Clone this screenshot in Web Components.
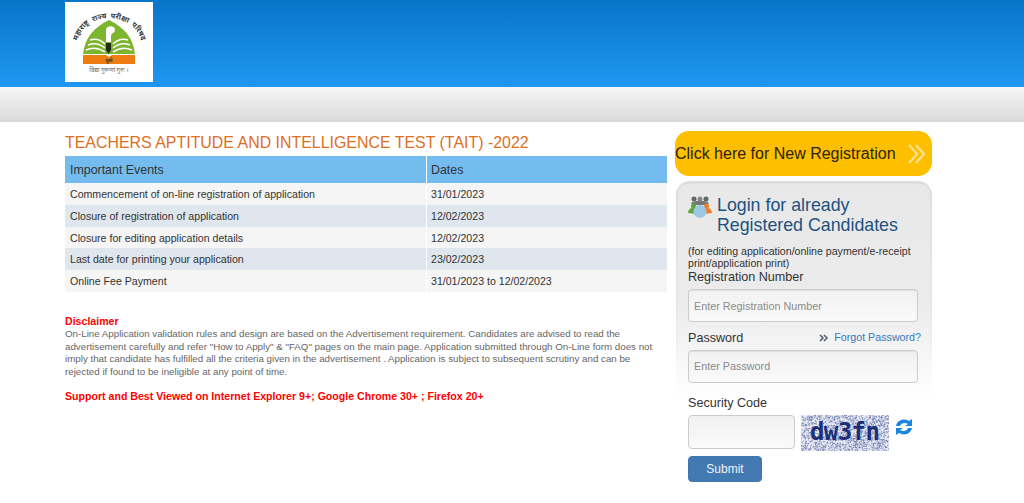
<!DOCTYPE html>
<html lang="en">
<head>
<meta charset="utf-8">
<title>TAIT 2022</title>
<style>
  html, body { margin: 0; padding: 0; background: #fff; }
  body { font-family: "Liberation Sans", Arial, sans-serif; color: #333; }
</style>
</head>
<body>
<site-header></site-header>
<page-main>
  <div slot="left">
    <events-table></events-table>
    <disclaimer-note></disclaimer-note>
  </div>
  <div slot="right">
    <register-button></register-button>
    <login-panel></login-panel>
  </div>
</page-main>

<script>
class SiteHeader extends HTMLElement {
  connectedCallback() {
    this.attachShadow({ mode: 'open' });
    this.shadowRoot.innerHTML = `
      <style>
        :host { display: block; }
        .top {
          height: 87px;
          box-sizing: border-box;
          padding: 2px 0 0 65px;
          background: linear-gradient(to bottom, #0875c9, #1f97f1);
        }
        .logo { display: block; width: 88px; height: 80px; background: #fff; }
        .bar {
          height: 35px;
          background: linear-gradient(to bottom, #f6f6f6, #d9d9d9);
        }
      </style>
      <div class="top">
        <svg class="logo" viewBox="0 0 88 80">
          <defs><path id="arc" d="M12 44 C14 7 74 7 77 44"/></defs>
          <text font-size="7.4" font-weight="700" word-spacing="2" fill="#3a3a3a" font-family="'Noto Sans', 'Noto Sans CJK SC', sans-serif"><textPath href="#arc" startOffset="50%" text-anchor="middle">महाराष्ट्र राज्य परीक्षा परिषद</textPath></text>
          <path d="M18 52 C20 36 28 26 44 18 C60 26 68 36 70 52 Z" fill="#7db52f"/>
          <path d="M41 40 V28 C41 23 50 23 50 28 C50 31 46 31 46 34 V40 Z" fill="#fff"/>
          <path d="M41 41 H46 V48 L43.500 52 L41 48 Z" fill="#1f2d14"/>
          <path d="M25 38 C31 36 36 38 40 42 M23 43 C30 40 35 42 40 46 M21 48 C28 45 34 46 40 50 M63 38 C57 36 52 38 48 42 M65 43 C58 40 53 42 48 46 M67 48 C60 45 54 46 48 50" stroke="#fff" stroke-width="1.500" fill="none"/>
          <path d="M18 53 H41 L44 55 L47 53 H70 V62 H18 Z" fill="#ee7d11"/>
          <text x="44" y="60" font-size="5" font-weight="700" text-anchor="middle" fill="#333" font-family="'Noto Sans', sans-serif">पुणे</text>
          <text x="44" y="70" font-size="6" text-anchor="middle" fill="#666" font-family="'Noto Sans', sans-serif">विद्या गुरूणां गुरुः ।</text>
        </svg>
      </div>
      <div class="bar"></div>
    `;
  }
}

class PageMain extends HTMLElement {
  connectedCallback() {
    this.attachShadow({ mode: 'open' });
    this.shadowRoot.innerHTML = `
      <style>
        :host {
          display: flex;
          gap: 8px;
          padding: 9px 0 0 65px;
        }
        .left { width: 602px; }
        .right { width: 257px; }
      </style>
      <div class="left"><slot name="left"></slot></div>
      <div class="right"><slot name="right"></slot></div>
    `;
  }
}

class EventsTable extends HTMLElement {
  connectedCallback() {
    this.attachShadow({ mode: 'open' });
    const rows = [
      ['Commencement of on-line registration of application', '31/01/2023'],
      ['Closure of registration of application', '12/02/2023'],
      ['Closure for editing application details', '12/02/2023'],
      ['Last date for printing your application', '23/02/2023'],
      ['Online Fee Payment', '31/01/2023 to 12/02/2023']
    ];
    this.shadowRoot.innerHTML = `
      <style>
        :host { display: block; }
        h1 {
          margin: 0;
          height: 25px;
          font-size: 15.93px;
          line-height: 24px;
          font-weight: 400;
          color: #dd6f1e;
          white-space: nowrap;
        }
        .row {
          display: grid;
          grid-template-columns: 361px 1fr;
          height: 21.8px;
          line-height: 21.8px;
          font-size: 10.6px;
          color: #333;
          background: #f5f5f5;
        }
        .row:nth-child(odd) { background: #dfe6ee; }
        .row.head {
          height: 27px;
          line-height: 27px;
          font-size: 12.4px;
          background: #74bcf0;
        }
        .row > span { padding: 1px 0 0 5px; }
        .row > span + span { border-left: 1px solid #fff; padding-left: 4px; }
      </style>
      <h1>TEACHERS APTITUDE AND INTELLIGENCE TEST (TAIT) -2022</h1>
      <div class="list">
        <div class="row head"><span>Important Events</span><span>Dates</span></div>
        ${rows.map(r => `<div class="row"><span>${r[0]}</span><span>${r[1]}</span></div>`).join('')}
      </div>
    `;
  }
}

class DisclaimerNote extends HTMLElement {
  connectedCallback() {
    this.attachShadow({ mode: 'open' });
    this.shadowRoot.innerHTML = `
      <style>
        :host { display: block; padding-top: 23px; font-size: 9.75px; line-height: 12.5px; color: #666; }
        b { display: block; color: #f00; font-size: 10.6px; line-height: 12px; }
        p { margin: 1.5px 0 0; }
        .support { margin-top: 12px; color: #f00; font-weight: 700; font-size: 10.6px; }
      </style>
      <b>Disclaimer</b>
      <p>On-Line Application validation rules and design are based on the Advertisement requirement. Candidates are advised to read the advertisement carefully and refer "How to Apply" &amp; "FAQ" pages on the main page. Application submitted through On-Line form does not imply that candidate has fulfilled all the criteria given in the advertisement . Application is subject to subsequent scrutiny and can be rejected if found to be ineligible at any point of time.</p>
      <div class="support">Support and Best Viewed on Internet Explorer 9+; Google Chrome 30+ ; Firefox 20+</div>
    `;
  }
}

class RegisterButton extends HTMLElement {
  connectedCallback() {
    this.attachShadow({ mode: 'open' });
    this.shadowRoot.innerHTML = `
      <style>
        :host {
          display: flex;
          align-items: center;
          justify-content: space-between;
          height: 45px;
          padding-right: 5px;
          border-radius: 14px;
          background: #fdbf00;
          color: #2a2200;
          font-size: 16px;
          white-space: nowrap;
        }
        svg { width: 20px; height: 20px; }
      </style>
      <span>Click here for New Registration</span>
      <svg viewBox="0 0 20 20" fill="none" stroke="#fde08a" stroke-width="2.4">
        <path d="M2 1 L10 10 L2 19"/><path d="M9 1 L17 10 L9 19"/>
      </svg>
    `;
  }
}

class LoginField extends HTMLElement {
  connectedCallback() {
    this.attachShadow({ mode: 'open' });
    const ph = this.getAttribute('placeholder') || '';
    this.shadowRoot.innerHTML = `
      <style>
        :host { display: block; }
        .top { display: flex; justify-content: space-between; align-items: baseline; font-size: 12.6px; line-height: 15px; color: #333; }
        input {
          display: block;
          box-sizing: border-box;
          width: 230px;
          height: 33px;
          margin: 4px 0 0;
          padding: 0 5px;
          border: 1px solid #ccc;
          border-radius: 4px;
          background: linear-gradient(to bottom, #f1f1f1, #fafafa);
          box-shadow: inset 0 1px 1px rgba(0,0,0,.08);
          font: 10.8px "Liberation Sans", Arial, sans-serif;
          color: #555;
        }
        input::placeholder { color: #8a8a8a; opacity: 1; }
      </style>
      <div class="top"><span>${this.getAttribute('label')}</span><slot></slot></div>
      <input type="text" placeholder="${ph}">
    `;
  }
}

class CaptchaImage extends HTMLElement {
  connectedCallback() {
    this.attachShadow({ mode: 'open' });
    // speckle background, seeded so every render is the same
    let seed = 7, dots = '';
    const rnd = () => (seed = (seed * 16807) % 2147483647) / 2147483647;
    for (let i = 0; i < 1500; i++) {
      dots += `<rect x="${(rnd() * 88).toFixed(1)}" y="${(rnd() * 36).toFixed(1)}" width="1" height="1" fill="${rnd() > .5 ? '#6473ad' : '#98a2c8'}"/>`;
    }
    this.shadowRoot.innerHTML = `
      <style>
        :host { display: block; position: relative; width: 88px; height: 36px; background: #e8eaf2; overflow: hidden; }
        svg { position: absolute; inset: 0; }
        span {
          position: absolute; left: 9px; top: 4px;
          font: 700 24px/26px "DejaVu Sans Mono", monospace;
          letter-spacing: -0.6px;
          color: #1c2f78;
        }
      </style>
      <svg width="88" height="36">${dots}</svg>
      <span>dw3fn</span>
    `;
  }
}

class LoginPanel extends HTMLElement {
  connectedCallback() {
    this.attachShadow({ mode: 'open' });
    this.shadowRoot.innerHTML = `
      <style>
        :host {
          display: block;
          box-sizing: border-box;
          height: 305px;
          margin: 5px 0 0 1px;
          padding: 11px 13px 0 12px;
          border-top: 3px solid #dedede;
          border-radius: 14px 14px 0 0;
          background:
            linear-gradient(to bottom, #dedede, rgba(222,222,222,0) 62%) left top / 2px 100% no-repeat,
            linear-gradient(to bottom, #dedede, rgba(222,222,222,0) 62%) right top / 2px 100% no-repeat,
            linear-gradient(to bottom, #e8e8e8 0, #ececec 40%, #fff 72%);
        }
        .title { display: flex; gap: 5px; }
        .title svg { flex: none; width: 24px; height: 22px; margin-top: 1px; }
        h2 { margin: 0; font-size: 17.8px; line-height: 20px; font-weight: 400; color: #21527f; }
        .note { margin-top: 10px; font-size: 10.6px; line-height: 12px; color: #333; }
        login-field { margin-top: 1px; }
        login-field.pw { margin-top: 8px; }
        .forgot { color: #337ab7; font-size: 10.7px; display: inline-flex; align-items: center; gap: 5px; margin-right: -2px; }
        .forgot svg { width: 10px; height: 8px; }
        .sec { margin-top: 13px; font-size: 12.6px; line-height: 15px; }
        .code { display: flex; align-items: flex-start; gap: 6px; margin-top: 4px; }
        .code input {
          box-sizing: border-box; width: 107px; height: 34px; margin: 0;
          border: 1px solid #ccc; border-radius: 4px;
          background: linear-gradient(to bottom, #f1f1f1, #fafafa);
        }
        .refresh { width: 18px; height: 18px; margin-top: 3px; }
        button {
          display: block;
          width: 74px; height: 26px; margin-top: 5px; padding: 0;
          border: 1px solid #3f77ac; border-radius: 4px;
          background: #4279b0; color: #eef3f8;
          font: 12px "Liberation Sans", Arial, sans-serif;
        }
      </style>
      <div class="title">
        <svg viewBox="0 0 24 22">
          <circle cx="6" cy="3" r="2.500" fill="#666"/><circle cx="12" cy="3" r="2.500" fill="#888"/><circle cx="18" cy="3" r="2.500" fill="#666"/>
          <path d="M3 7 C6 4 18 4 21 7 L19 9 H5 Z" fill="#777"/>
          <circle cx="5.500" cy="10" r="2.500" fill="#5ca83c"/><circle cx="18.500" cy="10" r="2.500" fill="#ef7d26"/>
          <path d="M0 17 C0 11 9 10 11 13 L9 18 Z" fill="#5ca83c"/>
          <path d="M24 17 C24 11 15 10 13 13 L15 18 Z" fill="#ef7d26"/>
          <circle cx="12" cy="15.500" r="6.500" fill="#9cc7e4"/>
        </svg>
        <h2>Login for already<br>Registered Candidates</h2>
      </div>
      <div class="note">(for editing application/online payment/e-receipt print/application print)</div>
      <login-field label="Registration Number" placeholder="Enter Registration Number"></login-field>
      <login-field class="pw" label="Password" placeholder="Enter Password">
        <span class="forgot">
          <svg viewBox="0 0 10 8" fill="none" stroke="#5a6470" stroke-width="1.600"><path d="M1 1 L4 4 L1 7 M5 1 L8 4 L5 7"/></svg>
          Forgot Password?
        </span>
      </login-field>
      <div class="sec">Security Code</div>
      <div class="code">
        <input type="text" aria-label="Security Code">
        <captcha-image></captcha-image>
        <svg class="refresh" viewBox="0 0 18 18" fill="#1a86e0">
          <path d="M1 8 C2 2 9 0 14 3 L17 1 L17 8 L10 8 L13 6 C10 4 6 5 5 8 Z"/>
          <path d="M17 10 C16 16 9 18 4 15 L1 17 L1 10 L8 10 L5 12 C8 14 12 13 13 10 Z"/>
        </svg>
      </div>
      <button>Submit</button>
    `;
  }
}

customElements.define('site-header', SiteHeader);
customElements.define('page-main', PageMain);
customElements.define('events-table', EventsTable);
customElements.define('disclaimer-note', DisclaimerNote);
customElements.define('register-button', RegisterButton);
customElements.define('login-field', LoginField);
customElements.define('captcha-image', CaptchaImage);
customElements.define('login-panel', LoginPanel);
</script>
</body>
</html>
